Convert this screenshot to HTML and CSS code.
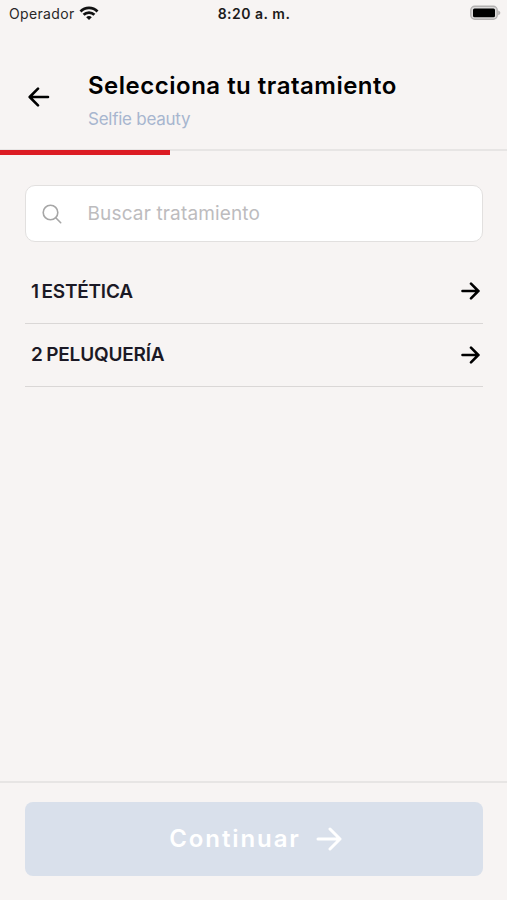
FILE: index.html
```html
<!DOCTYPE html>
<html lang="es">
<head>
<meta charset="utf-8">
<title>Selecciona tu tratamiento</title>
<link rel="stylesheet" href="styles.css">
</head>
<body>
<div class="screen">
  <div class="status">
    <div class="carrier"><span class="carrier-name">Operador</span>
      <svg class="wifi" width="20" height="15" viewBox="0 0 20 15" fill="none" stroke="#111" stroke-width="2.8"><path d="M1.5 5.4C6.2.7 13.8.7 18.5 5.4M4.6 8.7c3-2.9 7.8-2.9 10.800 0"/><path d="M7.2 11.2c1.6-1.5 4-1.5 5.6 0L10 14z" fill="#111" stroke="none"/></svg>
    </div>
    <time class="clock">8:20 a. m.</time>
    <svg class="battery" width="31" height="16" viewBox="0 0 31 16"><rect x=".8" y="1.3" width="26.4" height="13" rx="4" fill="#dddbdb" stroke="#b3b1b1" stroke-width="1.4"/><rect x="3" y="3.4" width="22" height="8.8" rx="1.5"/><path d="M28.2 5.5c2.8 1 2.8 3.7 0 4.700z" fill="#b3b1b1"/></svg>
  </div>
  <header class="header">
    <svg class="back" width="22" height="20" viewBox="0 0 22 20" fill="none" stroke="#000" stroke-width="2.6" stroke-linecap="round" stroke-linejoin="round"><path d="M20 10H2M10 1.700 1.700 10l8.300 8.300"/></svg>
    <div class="headings">
      <h1 class="title">Selecciona tu tratamiento</h1>
      <p class="subtitle">Selfie beauty</p>
    </div>
  </header>
  <div class="track"><div class="progress"></div></div>
  <main class="content">
    <div class="search">
      <svg class="lens" width="20" height="20" viewBox="0 0 20 20" fill="none" stroke="#a6a6a6" stroke-width="1.600" stroke-linecap="round"><circle cx="8.500" cy="8.500" r="7.300"/><path d="m14 14 4.700 4.700"/></svg>
      <span class="placeholder">Buscar tratamiento</span>
    </div>
    <ul class="list">
      <li class="row"><span class="label label-first">1 ESTÉTICA</span><svg width="19" height="18" viewBox="0 0 19 18" class="arrow"><path d="M1.500 9h16M10 1.700 17.300 9 10 16.300"/></svg></li>
      <li class="row"><span class="label label-second">2 PELUQUERÍA</span><svg width="19" height="18" viewBox="0 0 19 18" class="arrow"><path d="M1.500 9h16M10 1.700 17.300 9 10 16.300"/></svg></li>
    </ul>
  </main>
  <footer class="footer">
    <button class="continue"><span>Continuar</span><svg width="26" height="24" viewBox="0 0 26 24" fill="none" stroke="#fff" stroke-width="3" stroke-linecap="round" stroke-linejoin="round"><path d="M2 12h22M14 2l10 10-10 10"/></svg></button>
  </footer>
</div>
</body>
</html>
```
FILE: styles.css
```css
* { box-sizing: border-box; }
body { margin: 0; background: #f7f4f3; font-family: Inter, "Liberation Sans", sans-serif; color: #000; }
h1, p, ul { margin: 0; padding: 0; }
svg { display: block; flex: none; }
.screen { height: 900px; display: flex; flex-direction: column; }
.status { height: 28px; display: grid; grid-template-columns: 1fr auto 1fr; align-items: center; padding: 0 6px 2px 9px; font-size: 14px; }
.carrier { display: flex; align-items: center; gap: 4px; color: #292727; }
.carrier-name { letter-spacing: 0.35px; }
.clock { margin-left: -2px; font-weight: 600; letter-spacing: 0.5px; color: #1c1b1b; }
.battery { justify-self: end; }
.header { height: 121px; display: flex; padding: 42px 0 0 28px; }
.back { margin-top: 17px; }
.headings { margin-left: 38px; }
.title { font-size: 24px; line-height: 32px; font-weight: 600; letter-spacing: 0.5px; white-space: nowrap; }
.subtitle { margin-top: 5px; font-size: 17px; line-height: 24px; letter-spacing: -0.25px; color: #a7b6cf; }
.track { height: 6px; background: linear-gradient(#e7e5e4, #e7e5e4) 0 0 / 100% 2px no-repeat; padding-top: 1px; }
.progress { width: 170px; height: 5px; background: #dc1c23; }
.content { flex: 1; padding: 30px 24px 0 25px; }
.search { height: 57px; display: flex; align-items: center; padding-left: 16px; border: 1.500px solid #e2e0df; border-radius: 10px; background: #fff; }
.placeholder { margin: -1px 0 0 25.500px; font-size: 19px; letter-spacing: 0.15px; color: #bdbcbe; }
.list { list-style: none; padding-top: 18px; }
.row { height: 63.500px; display: flex; align-items: center; justify-content: space-between; padding: 0 3px 0 6px; border-bottom: 1.500px solid #dad7d6; }
.label { font-size: 19px; font-weight: 600; color: #1b1925; }
.label-first { letter-spacing: -0.2px; word-spacing: -2px; }
.label-second { letter-spacing: -0.2px; word-spacing: -1px; }
.arrow { fill: none; stroke: #000; stroke-width: 2.600; stroke-linecap: round; stroke-linejoin: round; }
.footer { height: 119px; border-top: 2px solid #e7e5e4; padding: 19px 24px 0 25px; }
.continue { width: 100%; height: 74px; display: flex; align-items: center; justify-content: center; gap: 15px; padding: 0 0 1px 3px; border: 0; border-radius: 8px; background: #d9e0eb; color: #fff; font: 600 24px Inter, "Liberation Sans", sans-serif; letter-spacing: 1.900px; }
```
